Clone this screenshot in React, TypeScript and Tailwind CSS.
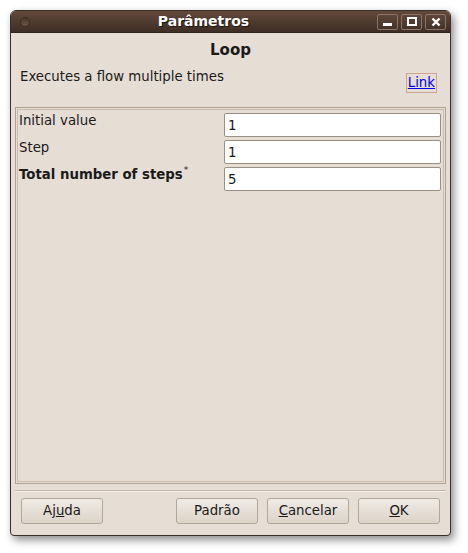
import { useState } from "react";

const font = { fontFamily: '"DejaVu Sans", "Liberation Sans", sans-serif' };

const TitleButton = ({ kind }: { kind: "min" | "max" | "close" }) => (
  <div className="w-[21px] h-[16px] rounded-[2px] border border-[#8a7568] bg-gradient-to-b from-[#5d463a] to-[#44332a] flex items-center justify-center">
    {kind === "min" && <div className="w-[9px] h-[3px] bg-white mt-[6px]" />}
    {kind === "max" && <div className="w-[10px] h-[9px] border-2 border-white" />}
    {kind === "close" && (
      <svg width="10" height="10" viewBox="0 0 10 10">
        <path d="M1.5 1.5 L8.5 8.5 M8.5 1.5 L1.5 8.5" stroke="white" strokeWidth="2.4" />
      </svg>
    )}
  </div>
);

const Field = ({ label, value, bold }: { label: string; value: string; bold?: boolean }) => {
  const [v, setV] = useState(value);
  return (
    <div className="flex items-start">
      <div className={`flex-1 leading-[16px] text-[13.3px] text-[#1a1a1a] ${bold ? "font-bold" : ""}`}>
        {label}
        {bold && <span className="inline-block text-[9px] font-normal relative top-[-6px] ml-[1px]">*</span>}
      </div>
      <input
        value={v}
        onChange={(e) => setV(e.target.value)}
        className="w-[217px] h-[24px] bg-white border border-[#9b8e82] rounded-[2px] px-[3px] text-[13.3px] text-[#1a1a1a] outline-none"
        style={font}
      />
    </div>
  );
};

const Button = ({ children }: { children: React.ReactNode }) => (
  <button className="w-[82px] h-[26px] rounded-[3px] border border-[#b2a698] bg-gradient-to-b from-[#f0ebe5] to-[#ddd3c8] text-[13.3px] text-[#1a1a1a]" style={font}>
    {children}
  </button>
);

export default function App() {
  return (
    <div className="w-[468px] h-[553px] bg-white pt-[10px] pl-[10px]" style={font}>
      <div className="w-[441px] h-[526px] flex flex-col rounded-t-[6px] rounded-b-[4px] border border-[#3a2e28] shadow-[3px_4px_8px_rgba(0,0,0,0.45)] overflow-hidden bg-[#e6ddd4]">
        {/* barra de título */}
        <div className="h-[22px] flex items-center px-[9px] bg-gradient-to-b from-[#63493b] to-[#3e2e25] border-b border-[#2e221c]">
          <div className="w-[10px] h-[10px] rounded-full border border-[#3a2b23] bg-gradient-to-b from-[#4a372d] to-[#6e5546]" />
          <div className="flex-1 text-center text-white font-bold text-[14px] [text-shadow:1px_1px_1px_#1d1410]">
            Parâmetros
          </div>
          <div className="flex gap-[3px] -mr-[5px]">
            <TitleButton kind="min" />
            <TitleButton kind="max" />
            <TitleButton kind="close" />
          </div>
        </div>

        {/* cabeçalho */}
        <div className="text-center font-bold text-[15px] text-[#1a1a1a] mt-[8px] leading-[18px]">Loop</div>
        <div className="flex justify-between items-start mt-[6px] pl-[9px] pr-[13px]">
          <span className="text-[13.3px] text-[#1a1a1a] leading-[16px] mt-[4px]">Executes a flow multiple times</span>
          <span className="mt-[8px] px-[1px] h-[20px] leading-[18px] border border-[#d2a490] text-[13.3px] text-[#0000ee] underline">
            Link
          </span>
        </div>

        {/* painel */}
        <div className="mx-[4px] mt-[14px] h-[377px] border border-[#b0a293] p-[1px]">
          <div className="h-full border border-[#c9bcae] bg-[#e6ddd4] pt-[3px] pl-[1px] pr-[2px] flex flex-col gap-[3px]">
            <Field label="Initial value" value="1" />
            <Field label="Step" value="1" />
            <Field label="Total number of steps" value="5" bold />
          </div>
        </div>

        {/* separador */}
        <div className="mx-[4px] mt-[6px] h-[2px] border-t border-[#c4b6a8] border-b-[#f4efe9] border-b" />

        {/* botões */}
        <div className="flex items-center mt-[6px] pl-[10px] pr-[10px]">
          <Button>
            Aj<u>u</u>da
          </Button>
          <div className="flex-1" />
          <div className="flex gap-[9px]">
            <Button>Padrão</Button>
            <Button>
              <u>C</u>ancelar
            </Button>
            <Button>
              <u>O</u>K
            </Button>
          </div>
        </div>
      </div>
    </div>
  );
}
